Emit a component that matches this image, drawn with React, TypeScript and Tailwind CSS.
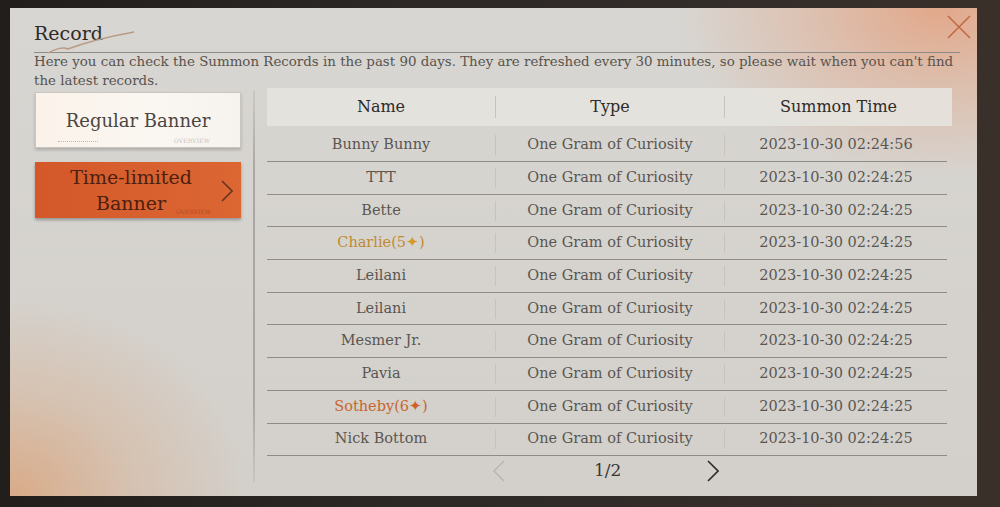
import React from "react";

const rows: { name: string; color?: string; star?: boolean; time: string }[] = [
  { name: "Bunny Bunny", time: "2023-10-30 02:24:56" },
  { name: "TTT", time: "2023-10-30 02:24:25" },
  { name: "Bette", time: "2023-10-30 02:24:25" },
  { name: "Charlie(5", color: "gold", star: true, time: "2023-10-30 02:24:25" },
  { name: "Leilani", time: "2023-10-30 02:24:25" },
  { name: "Leilani", time: "2023-10-30 02:24:25" },
  { name: "Mesmer Jr.", time: "2023-10-30 02:24:25" },
  { name: "Pavia", time: "2023-10-30 02:24:25" },
  { name: "Sotheby(6", color: "orange", star: true, time: "2023-10-30 02:24:25" },
  { name: "Nick Bottom", time: "2023-10-30 02:24:25" },
];

const serif = "font-['DejaVu_Serif',serif]";

export default function App() {
  return (
    <div className={`w-[1000px] h-[507px] overflow-hidden bg-[linear-gradient(90deg,#221e1c_0%,#2e2a28_50%,#3a302a_100%)] pl-[10px] pt-[8px] ${serif}`}>
      <div className="relative w-[967px] h-[488px] bg-[#d4d1cc] bg-[radial-gradient(ellipse_260px_170px_at_96%_0%,#e2a88a_0%,rgba(226,168,138,0.5)_45%,transparent_100%),radial-gradient(ellipse_240px_200px_at_0%_100%,#d9ab88_0%,rgba(217,171,136,0.4)_50%,transparent_100%),linear-gradient(180deg,#d8d6d2_0%,#d3d0cb_100%)]">
        {/* close */}
        <svg className="absolute left-[936px] top-[6px]" width="26" height="26" viewBox="0 0 26 26">
          <path d="M2 2 L24 24 M24 2 L2 24" stroke="#c46a42" strokeWidth="1.6" fill="none" />
        </svg>

        {/* header */}
        <div className="pl-[24px] pr-[17px] pt-[12px]">
          <div className="relative h-[33px] border-b border-[#8e8a85]">
            <div className="text-[19px] leading-[26px] text-[#2e2b28]">Record</div>
            <svg className="absolute left-[12px] top-[10px]" width="90" height="24" viewBox="0 0 90 24">
              <path d="M2 23 C 10 18, 18 17, 22 19 C 30 16, 55 8, 88 2" stroke="#b99b84" strokeWidth="1.4" fill="none" />
            </svg>
          </div>
          <p className="text-[13.4px] leading-[19px] text-[#58534e] mt-[-1px]">
            Here you can check the Summon Records in the past 90 days. They are refreshed every 30 minutes, so please wait when you can't find the latest records.
          </p>
        </div>

        {/* body */}
        <div className="flex mt-[-2px]">
          {/* left */}
          <div className="w-[206px] ml-[25px] flex flex-col gap-[14px] pt-[4px]">
            <div className="relative h-[56px] bg-[linear-gradient(90deg,#fbf2ea_0%,#faf7f2_60%,#f6f3ee_100%)] border border-[#c9c5bf] shadow-[0_2px_3px_rgba(0,0,0,0.2)] flex items-center justify-center">
              <span className="text-[18px] text-[#4a4642]">Regular Banner</span>
              <div className="absolute left-[22px] bottom-[5px] w-[40px] border-b border-dotted border-[#c9b8a8]" />
              <span className="absolute right-[30px] bottom-[2px] text-[6px] text-[#c8c2bb] tracking-wide">OVERVIEW</span>
            </div>
            <div className="relative h-[56px] bg-[linear-gradient(90deg,#d4582a_0%,#dc6733_100%)] shadow-[0_2px_3px_rgba(0,0,0,0.3)] flex items-center justify-center pr-[14px]">
              <span className="text-[19px] leading-[26px] text-[#4e200f] text-center">Time-limited<br />Banner</span>
              <svg className="absolute right-[8px] top-[18px]" width="12" height="22" viewBox="0 0 12 22">
                <path d="M1 1 L11 11 L1 21" stroke="#6a3322" strokeWidth="1.6" fill="none" />
              </svg>
              <span className="absolute right-[30px] bottom-[2px] text-[6px] text-[#b04a20]">OVERVIEW</span>
            </div>
          </div>

          {/* divider */}
          <div className="ml-[12px] w-[2px] h-[392px] mt-[2px] bg-[linear-gradient(180deg,rgba(160,155,150,0.2),rgba(160,155,150,0.8)_20%,rgba(160,155,150,0.8)_80%,rgba(160,155,150,0.2))]" />

          {/* table */}
          <div className="ml-[12px] w-[685px] flex flex-col">
            <div className="h-[38px] bg-[#e6e3de]/90 flex items-center text-[16px] text-[#2e2b28]">
              <div className="w-[228px] text-center">Name</div>
              <div className="w-[1px] h-[22px] bg-[#c6c2bc]" />
              <div className="w-[228px] text-center">Type</div>
              <div className="w-[1px] h-[22px] bg-[#c6c2bc]" />
              <div className="flex-1 text-center">Summon Time</div>
            </div>
            <div className="w-[680px] flex flex-col mt-[3px]">
              {rows.map((r, i) => (
                <div key={i} className={`${i === 0 ? "h-[33px]" : "h-[32.7px]"} border-b border-[#8f8b86] flex items-center text-[14.5px] text-[#5a5651]`}>
                  <div className={`w-[228px] text-center ${r.color === "gold" ? "text-[#c08a34]" : r.color === "orange" ? "text-[#c8652c]" : ""}`}>
                    {r.name}
                    {r.star && (
                      <>
                        <span className={r.color === "gold" ? "text-[#d49a2a]" : "text-[#d0602a]"}>✦</span>)
                      </>
                    )}
                  </div>
                  <div className="w-[1px] h-[20px] bg-[#c6c2bc]" />
                  <div className="w-[228px] text-center">One Gram of Curiosity</div>
                  <div className="w-[1px] h-[20px] bg-[#c6c2bc]" />
                  <div className="flex-1 text-center">{r.time}</div>
                </div>
              ))}
            </div>
            <div className="flex items-center h-[28px] mt-[1px]">
              <svg className="ml-[226px]" width="12" height="22" viewBox="0 0 12 22">
                <path d="M11 1 L1 11 L11 21" stroke="#b8b4ae" strokeWidth="1.4" fill="none" />
              </svg>
              <span className="ml-[89px] text-[17px] text-[#3a3632]">1/2</span>
              <svg className="ml-[86px]" width="12" height="22" viewBox="0 0 12 22">
                <path d="M1 1 L11 11 L1 21" stroke="#2e2b28" strokeWidth="1.6" fill="none" />
              </svg>
            </div>
          </div>
        </div>
      </div>
    </div>
  );
}
